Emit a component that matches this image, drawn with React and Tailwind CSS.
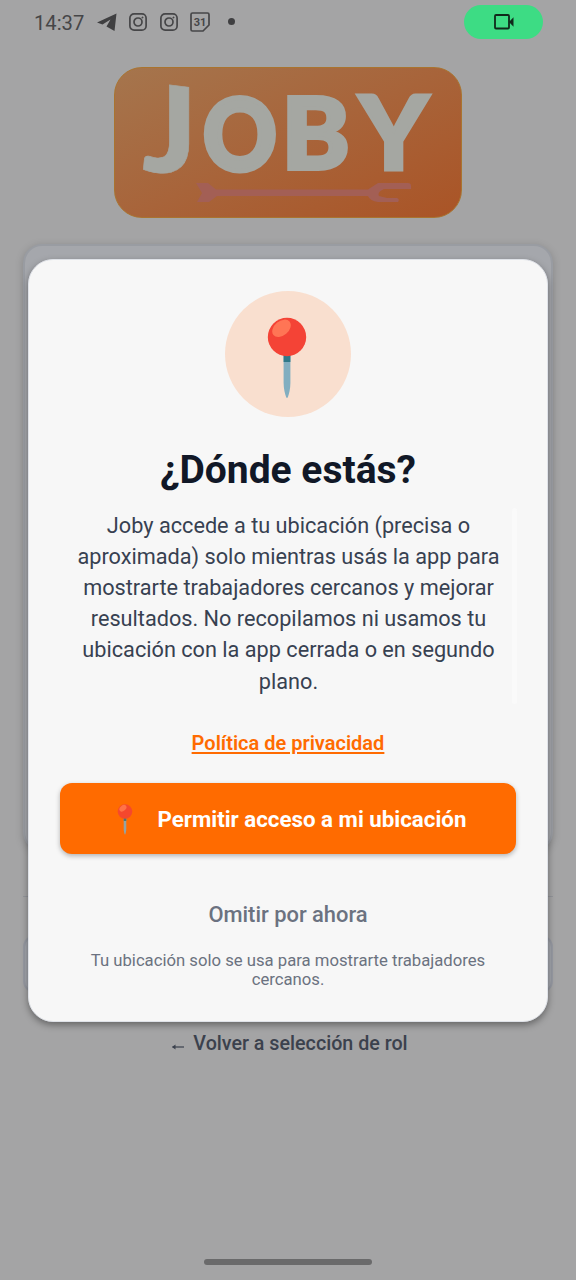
import React from "react";

function Pin({ className }) {
  return (
    <svg viewBox="0 0 40 82" className={className}>
      <path d="M16.600 36h6.800v30c0 6-1.500 11-2.500 14q-.9 1.800-1.800 0c-1-3-2.500-8-2.500-14z" fill="#82aec0" />
      <path d="M16.600 36h6.800v9h-6.800z" fill="#2f7889" />
      <circle cx="20" cy="20" r="19.200" fill="#f44336" />
      <ellipse cx="14.500" cy="11.300" rx="10.500" ry="7.200" transform="rotate(-40 14.500 11.300)" fill="#ff7555" />
    </svg>
  );
}

function Instagram() {
  return (
    <svg viewBox="0 0 18 18" className="h-[18px] w-[18px]" fill="none" stroke="#464648" strokeWidth="1.700">
      <rect x="0.900" y="0.900" width="16.200" height="16.200" rx="4.200" />
      <circle cx="9" cy="9" r="4" />
      <circle cx="13.500" cy="4.500" r="0.600" fill="#464648" strokeWidth="0.800" />
    </svg>
  );
}

function StatusBar() {
  return (
    <header className="flex h-[43px] items-center pl-[34px] pr-[33px] text-[#464648]">
      <span className="w-[50px] whitespace-nowrap pt-[3px] text-[20.200px] leading-none">14:37</span>
      <svg viewBox="0 0 20 18" className="ml-[13px] h-[18px] w-5">
        <path d="M0 9.500 19.500.5 17.500 18 9.500 13.500 13.500 6.500 5.500 11.500Z" fill="#3f3f41" />
      </svg>
      <div className="ml-[12px]"><Instagram /></div>
      <div className="ml-[13px]"><Instagram /></div>
      <svg viewBox="0 0 20 20" className="ml-[12px] h-5 w-5" fill="none" stroke="#464648" strokeWidth="1.700">
        <path d="M2.500 1h15q1.500 0 1.500 1.500V13l-6 6H2.500Q1 19 1 17.500v-15Q1 1 2.500 1Z" />
        <text x="10" y="13.500" textAnchor="middle" fontFamily="Roboto" fontSize="11" fontWeight="700" fill="#464648" stroke="none">31</text>
      </svg>
      <span className="ml-[18px] h-[7px] w-[7px] rounded-full bg-[#3f3f41]" />
      <div className="mt-px ml-auto flex h-[34px] w-[79px] items-center justify-center rounded-full bg-[#3ddc84]">
        <svg viewBox="0 0 20 16" className="h-4 w-5">
          <rect x="1" y="1" width="14" height="13.500" rx="1" fill="none" stroke="#10291b" strokeWidth="1.800" />
          <path d="M15 8l4.500-4.800v9.600Z" fill="#10291b" />
        </svg>
      </div>
    </header>
  );
}

function Logo() {
  return (
    <div className="mx-auto mt-[24px] h-[151px] w-[348px] rounded-[28px] border border-[#a9742f] bg-linear-[155deg] from-[#a5754d] via-[#a8643a] to-[#aa5426]">
      <svg viewBox="115 68 346 149" className="h-full w-full overflow-visible" fontFamily="Lato" fontWeight="900">
        <g fill="#a5a7a2" stroke="#a5a7a2" strokeWidth="3" strokeLinejoin="miter" fontSize="100">
          <text transform="translate(142 170) rotate(7) skewX(7) scale(1.300 1.210)" strokeWidth="0.500">J</text>
          <text transform="translate(203 169.500) scale(0.910 0.990)" strokeWidth="5">O</text>
          <text transform="translate(281.500 169) scale(1.030 1.000)" strokeWidth="4">B</text>
          <text transform="translate(358.500 170) scale(1.070 1.020)">Y</text>
        </g>
        <path d="M196 183h12l8 6.500 152 0 10-6.500h30q3 0 3 3v3h-27q-7 3-5 7l8 2h10q3 1 1 4h-20q-8-1-10-6H217l-8 6h-12l5-9Z" fill="#a35f55" />
      </svg>
    </div>
  );
}

function PermissionDialog() {
  return (
    <section className="relative flex h-[763px] w-[520px] flex-col items-center rounded-[25px] border-[1.500px] border-[#dfe2e8] bg-[#f7f7f7] px-[30px] pt-[31px] shadow-[0_3px_7px_rgba(0,0,0,0.38)]">
      <div className="absolute right-[30px] top-[248px] h-[196px] w-[5px] rounded bg-[#fafafa]" />
      <div className="flex h-[126px] w-[126px] shrink-0 items-center justify-center rounded-full bg-[#f9dfcf]">
        <Pin className="mr-0.5 mt-[7px] h-[82px] w-10" />
      </div>
      <h1 className="mt-[29px] whitespace-nowrap text-[39px] font-bold leading-[48px] text-[#111827]">¿Dónde estás?</h1>
      <p className="mt-[15.500px] whitespace-nowrap pl-px text-center text-[21.700px] leading-[31.200px] text-[#374151]">
        Joby accede a tu ubicación (precisa o<br />
        aproximada) solo mientras usás la app para<br />
        mostrarte trabajadores cercanos y mejorar<br />
        resultados. No recopilamos ni usamos tu<br />
        ubicación con la app cerrada o en segundo<br />
        plano.
      </p>
      <a className="mt-[32px] whitespace-nowrap text-[20px] font-semibold leading-[28px] text-[#ff6b00] underline decoration-[1.500px] underline-offset-2">Política de privacidad</a>
      <button className="mt-[26px] flex h-[71px] w-[456px] shrink-0 items-center rounded-xl bg-[#ff6b00] pl-[56px] shadow-[0_2px_5px_rgba(0,0,0,0.28)]">
        <Pin className="mt-0.5 h-[31px] w-[18px] opacity-85" />
        <span className="ml-[23.500px] mt-[3px] whitespace-nowrap text-[22.300px] font-bold text-white">Permitir acceso a mi ubicación</span>
      </button>
      <button className="mt-[46px] whitespace-nowrap text-[21.900px] font-medium leading-[30px] text-[#6b7280]">Omitir por ahora</button>
      <p className="mt-[21px] whitespace-nowrap text-center text-[16.700px] leading-[19.500px] text-[#6b7280]">
        Tu ubicación solo se usa para mostrarte trabajadores<br />cercanos.
      </p>
    </section>
  );
}

export default function App() {
  return (
    <div className="relative h-[1280px] w-[576px] overflow-hidden bg-[#a4a4a5] font-['Roboto',sans-serif]">
      <div className="flex h-full flex-col">
        <StatusBar />
        <Logo />
        <div className="mx-[23px] mt-[26px] h-[607px] rounded-[19px] border-2 border-[#999ca2] bg-[#a5a7ac] shadow-[0_2px_8px_rgba(0,0,0,0.18)]" />
        <div className="mx-[23px] mt-[45px] h-px bg-[#93959a]" />
        <div className="mx-[23px] mt-[38px] h-[58px] rounded-xl border-2 border-[#9699a2] bg-[#a2a5ac]" />
        <div className="mt-[37px] flex items-center justify-center whitespace-nowrap text-[19.700px] font-medium leading-[28px] text-[#3b414d]">
          <svg viewBox="0 0 14 8" className="ml-[3px] mr-[8px] mt-1.5 h-2 w-3.5" fill="none" stroke="#3b414d" strokeWidth="1.200"><path d="M13 4H1.500" /><path d="M4.500 1.500 1 4l3.500 2.500Z" fill="#3b414d" strokeWidth="0" /></svg>
          <span>Volver a selección de rol</span>
        </div>
        <div className="mx-auto mb-[15px] mt-auto h-[6px] w-[168px] rounded-full bg-[#6a6a6b]" />
      </div>
      <div className="absolute inset-0 flex justify-center pt-[259px]">
        <PermissionDialog />
      </div>
    </div>
  );
}
